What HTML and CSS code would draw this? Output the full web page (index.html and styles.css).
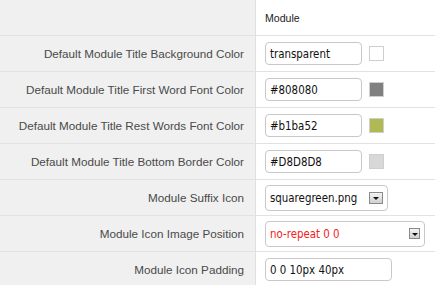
FILE: index.html
```html
<!DOCTYPE html>
<html lang="en">
<head>
    <meta charset="UTF-8">
    <title>Module</title>
    <link rel="stylesheet" href="styles.css">
</head>
<body>
    <table class="params">
        <tr class="head">
            <td class="label"></td>
            <td class="value">Module</td>
        </tr>
        <tr>
            <td class="label">Default Module Title Background Color</td>
            <td class="value">
                <div class="field">
                    <span class="box w97">transparent</span>
                    <span class="swatch" style="background:transparent"></span>
                </div>
            </td>
        </tr>
        <tr>
            <td class="label">Default Module Title First Word Font Color</td>
            <td class="value">
                <div class="field">
                    <span class="box w97">#808080</span>
                    <span class="swatch" style="background:#808080"></span>
                </div>
            </td>
        </tr>
        <tr>
            <td class="label">Default Module Title Rest Words Font Color</td>
            <td class="value">
                <div class="field">
                    <span class="box w97">#b1ba52</span>
                    <span class="swatch" style="background:#b1ba52"></span>
                </div>
            </td>
        </tr>
        <tr>
            <td class="label">Default Module Title Bottom Border Color</td>
            <td class="value">
                <div class="field">
                    <span class="box w97">#D8D8D8</span>
                    <span class="swatch" style="background:#D8D8D8"></span>
                </div>
            </td>
        </tr>
        <tr>
            <td class="label">Module Suffix Icon</td>
            <td class="value">
                <div class="field">
                    <span class="box sel w123">squaregreen.png<span class="arrow"></span></span>
                </div>
            </td>
        </tr>
        <tr>
            <td class="label">Module Icon Image Position</td>
            <td class="value">
                <div class="field">
                    <span class="box sel w160 red">no-repeat 0 0<span class="arrow"></span></span>
                </div>
            </td>
        </tr>
        <tr>
            <td class="label">Module Icon Padding</td>
            <td class="value">
                <div class="field">
                    <span class="box w127">0 0 10px 40px</span>
                </div>
            </td>
        </tr>
    </table>
</body>
</html>
```

FILE: styles.css
```css
body {
    margin: 0;
    background: #fff;
    font-family: "Liberation Sans", Arial, sans-serif;
}

.params {
    width: 435px;
    border-collapse: collapse;
}

.params td {
    height: 35px;
    padding: 0;
    border-bottom: 1px solid #e2e2e2;
    white-space: nowrap;
}

.label {
    width: 244px;
    padding-right: 11px !important;
    background: #f0f0f0;
    border-right: 1px solid #e0e0e0;
    color: #4a4a4a;
    font-size: 11.7px;
    text-align: right;
}

.value {
    padding-left: 9px !important;
}

.head .value {
    color: #222;
    font-size: 10.6px;
}

/* FIELDS */

.field {
    display: flex;
    align-items: center;
    gap: 7px;
}

.box {
    box-sizing: border-box;
    display: flex;
    align-items: center;
    justify-content: space-between;
    height: 23px;
    padding: 0 4px;
    border: 1px solid #c8c8c8;
    border-radius: 4px;
    background: #fff;
    color: #111;
    font-family: "DejaVu Sans Condensed", "Liberation Sans", sans-serif;
    font-size: 11.4px;
}

.sel {
    height: 26px;
    padding-right: 4px;
}

.w97 { width: 97px; }
.w123 { width: 123px; }
.w127 { width: 127px; }
.w160 { width: 160px; }

.red {
    color: #f42020;
}

.arrow {
    box-sizing: border-box;
    width: 14px;
    height: 12px;
    border: 1px solid #8a8a8a;
    background: linear-gradient(#f4f4f4, #d0d0d0);
    position: relative;
}

.arrow::after {
    content: "";
    position: absolute;
    left: 3px;
    top: 4px;
    border-left: 3px solid transparent;
    border-right: 3px solid transparent;
    border-top: 3px solid #111;
}

.w160 .arrow {
    width: 11px;
    height: 11px;
}

.w160 .arrow::after {
    left: 2px;
}

.swatch {
    box-sizing: border-box;
    width: 15px;
    height: 15px;
    border: 1px solid #cfcfcf;
}
```
